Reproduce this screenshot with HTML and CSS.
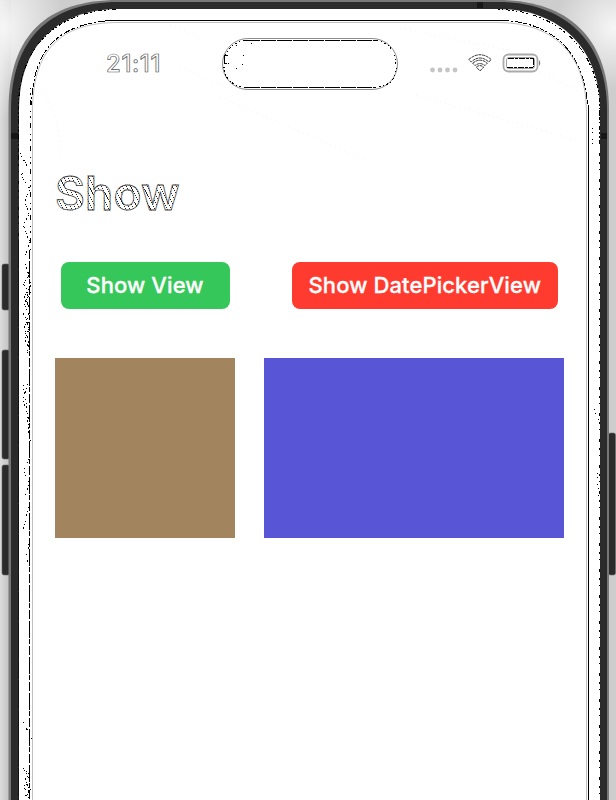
FILE: index.html
```html
<!DOCTYPE html>
<html lang="en">
<head>
<meta charset="utf-8">
<title>Show</title>
<link rel="stylesheet" href="styles.css">
</head>
<body>
<main class="device">
  <svg class="bezel" viewBox="0 0 616 800" aria-hidden="true">
    <defs>
      <linearGradient id="left" x2="1"><stop offset="0" stop-color="#dcdcdc"/><stop offset="1" stop-color="#bdbdbd"/></linearGradient>
      <radialGradient id="glow"><stop offset="0" stop-color="#f6f6f6"/><stop offset="1" stop-color="#f6f6f6" stop-opacity="0"/></radialGradient>
    </defs>
    <path fill="#cdcdcd" d="M0 0h616v800H0z"/>
    <path fill="url(#left)" d="M0 0h11v800H0z"/>
    <ellipse cx="4" cy="28" rx="60" ry="90" fill="url(#glow)"/>
    <ellipse cx="614" cy="28" rx="60" ry="60" fill="url(#glow)"/>
    <g fill="#2b2b2b" stroke="#666" stroke-width=".6">
      <rect x="2" y="264" width="8" height="46" rx="2"/>
      <rect x="2" y="350" width="8" height="109" rx="2"/>
      <rect x="2" y="465" width="8" height="110" rx="2"/>
      <rect x="608.500" y="433" width="7" height="142" rx="2"/>
    </g>
    <path fill="#777" d="M8.500 810V110C8.500 34 48 0 118 0H498C568 0 609 38 609 110V810z"/>
    <path fill="#2b2b2b" d="M11 810V110C11 38 51 2 118 2H498C564 2 607 41 607 110V810z"/>
    <path fill="#fff" d="M19 810V110C19 47 56 9 119 9H498C559 9 600 48 600 110V810z"/>
    <path fill="#161616" d="M11 133h7v6h-7zM601 133h6v6h-6zM477 2h6v6h-6z"/>
    <g fill="none" stroke="#000" shape-rendering="crispEdges">
      <path stroke-dasharray="2 2 1 3 4 2" d="M18.500 160V104C20 48 56 10 118 9.500M498 9.500C555 10 597 48 599.500 104V145"/>
      <path d="M105 20.500H505"/>
      <path stroke-dasharray="4 2 2 2 7 1" d="M31.500 105C33 50 57 24 112 20.500M505 20.500C558 24 584 57 587.500 105"/>
      <path stroke-dasharray="9 2 17 1 5 2" d="M29.500 250V800"/>
      <path stroke-dasharray="1 4 2 5 5 6" d="M30.500 88V250"/>
      <path d="M588.500 105V800"/>
      <path stroke="#111" stroke-dasharray="29 1 37 1 19 1" d="M18.500 240V800"/>
      <path stroke-dasharray="2 5 1 9 3 6" d="M18.500 112V240M599.500 110V800"/>
      <path stroke-dasharray="1 2 2 3 1 1" d="M20 153l7 13-6 10 9 13-5 12 4 14-6 9 7 19-5 12M25 264l4 12-6 8 8 9-7 10 6 14-6 11 5 14-2 13M31 285l-7 13 5 7-6 9 7 12-5 14 5 10M28 272l3 15-5 12 4 12-3 9 3 18"/>
      <path stroke-dasharray="1 3 1 2 2 5" d="M23 385l3 15 2 22 3 20M28 384l-5 16 6 18-1 16M30 455l-6 16 5 12-4 15M29 507l-6 22M30 540l-4 18 4 10M23 722l9 17M23 768l6 6-5 7 7 8-6 8M30 769l-2 31M24 770l5 9-5 8 6 12"/>
      <path stroke-dasharray="1 3 1 6" d="M592.500 128V150M594 409l5 11M597 473l2 25"/>
    </g>
    <path fill="none" stroke="#c2bec2" d="M32.500 810V112C32.500 50 60 22.500 118 22.500H498C555 22.500 586.500 56 586.500 112V810"/>
    <g fill="none" stroke="#f3f3f3" stroke-dasharray="1 4">
      <path d="M170 25q16 5 30 15M180 66q40 20 70 26M220 97l145 63M416 95l160 45M40 90q20 24 21 67M535 70l45 22M400 28l110 22"/>
    </g>
  </svg>

  <header class="status">
    <time class="clock">21:11</time>
    <svg class="island" viewBox="0 0 178 54" aria-hidden="true">
      <rect x="1.500" y="1.500" width="175" height="51" rx="25.500" fill="#fff" stroke="#8c8c8c"/>
      <path d="M24 3.500H155M24 50.500H155" stroke="#000" stroke-dasharray="15 1" shape-rendering="crispEdges"/>
      <path d="M24 3.500Q4 7 3 27T24 50.500M155 3.500Q173 6 175 27T155 50.500" fill="none" stroke="#000" stroke-dasharray="2 3 1 2" shape-rendering="crispEdges"/>
      <path d="M3 19h1v8h-1zM3 18h4v1h-4zM4 26h2v1h-2zM7 26h1v1h-1zM15 8h1v1h-1zM30 6h1v1h-1zM22 18h1v1h-1zM21 27h1v1h-1zM15 31h1v1h-1z"/>
    </svg>
    <div class="indicators">
      <svg class="cell" viewBox="0 0 28 6" aria-hidden="true"><g fill="#c5c5c5"><circle cx="2.500" cy="3" r="2.400"/><circle cx="10" cy="3" r="2.400"/><circle cx="17.500" cy="3" r="2.400"/><circle cx="25" cy="3" r="2.400"/></g></svg>
      <svg class="wifi" viewBox="0 0 24 18" aria-hidden="true">
        <g fill="#fff" stroke="#222" stroke-width=".9" stroke-dasharray="3 .6">
          <path d="M.8 5.500Q12-4 23.200 5.500L20.800 8Q12 0 3.200 8z"/>
          <path d="M4.700 9.200Q12 3.200 19.300 9.200L17 11.600Q12 7.500 7 11.600z"/>
          <path d="M8.300 13Q12 10.200 15.700 13L12 17z"/>
        </g>
      </svg>
      <svg class="battery" viewBox="0 0 40 20" aria-hidden="true">
        <rect x="1.500" y="1.500" width="34" height="17" rx="5" fill="#fff" stroke="#aaa" stroke-width="1.800"/>
        <rect x="4.500" y="4.500" width="28" height="11" rx="2.500" fill="none" stroke="#777" stroke-width=".7"/>
        <path d="M6 5.500H32M31.500 6V14M5 14.500H31" stroke="#000" stroke-dasharray="6 1 3 1" shape-rendering="crispEdges"/>
        <path d="M37 7q2.500 3 0 6z" fill="#777"/>
      </svg>
    </div>
  </header>

  <section class="content">
    <h1 class="title">Show</h1>
    <div class="actions">
      <button class="button green"><span>Show View</span></button>
      <button class="button red"><span>Show DatePickerView</span></button>
    </div>
    <div class="blocks">
      <div class="block brown"></div>
      <div class="block indigo"></div>
    </div>
  </section>
</main>
</body>
</html>
```
FILE: styles.css
```css
* { box-sizing: border-box; }
body { margin: 0; background: #fff; font-family: Inter, "Liberation Sans", sans-serif; }
.device { position: relative; width: 616px; height: 800px; overflow: hidden; }
.bezel { position: absolute; inset: 0; width: 616px; height: 800px; }
.status { position: relative; display: grid; grid-template-columns: 114px 178px 1fr; padding: 37px 70px 0 106px; height: 168px; align-items: start; }
.clock { margin-top: 13px; font-size: 24px; line-height: 28px; font-weight: 500; letter-spacing: 0.6px; color: #fff; -webkit-text-stroke: 0.7px #555; }
.island { width: 178px; height: 54px; margin-left: 1px; }
.indicators { display: flex; justify-content: flex-end; padding-top: 16px; margin-right: 4px; }
.cell { width: 28px; height: 6px; margin: 14px 10px 0 0; }
.wifi { width: 24px; height: 18px; margin: 1px 10px 0 0; }
.battery { width: 40px; height: 20px; }
.content { position: relative; padding: 0 52px 0 55px; }
.title {
  margin: 0; height: 94px; font-size: 46px; line-height: 51px; font-weight: 600; letter-spacing: 0.2px;
  color: transparent; -webkit-text-stroke: 0.8px #444;
  background: repeating-linear-gradient(63deg, #fff 0 1.6px, #222 1.6px 2.1px, #fff 2.1px 3.7px);
  -webkit-background-clip: text; background-clip: text;
}
.actions { display: flex; justify-content: space-between; padding: 0 6px 0 5.5px; height: 96px; }
.button { height: 46.5px; padding: 0; border: 0; border-radius: 8px; color: #fff; font: 500 22px/46px Inter, "Liberation Sans", sans-serif; letter-spacing: 0.1px; white-space: nowrap; -webkit-text-stroke: 0.3px #fff; }
.green { width: 169px; background: #35c759; }
.red { width: 266.5px; background: #ff3b30; }
.blocks { display: grid; grid-template-columns: 180px 300px; gap: 29px; }
.block { height: 180px; }
.brown { background: #a2845e; }
.indigo { background: #5856d6; }
```
